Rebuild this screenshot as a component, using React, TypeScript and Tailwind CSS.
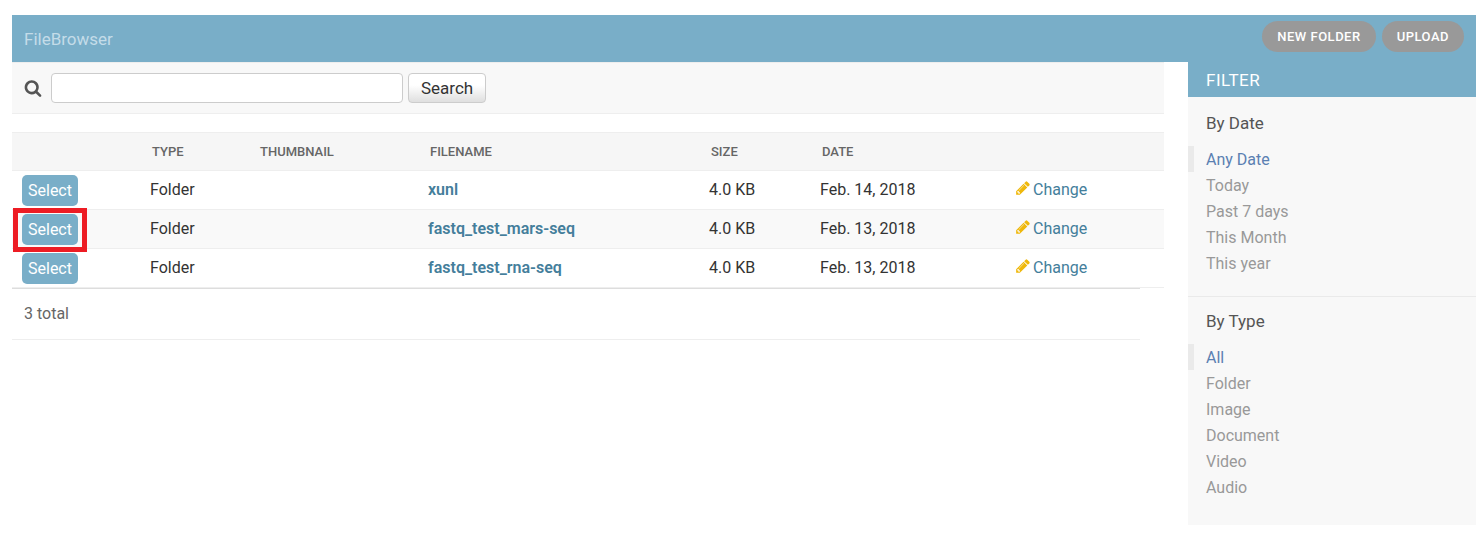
import React from "react";

type FileRow = { name: string; type: string; size: string; date: string; marked?: boolean };

const files: FileRow[] = [
  { name: "xunl", type: "Folder", size: "4.0 KB", date: "Feb. 14, 2018" },
  { name: "fastq_test_mars-seq", type: "Folder", size: "4.0 KB", date: "Feb. 13, 2018", marked: true },
  { name: "fastq_test_rna-seq", type: "Folder", size: "4.0 KB", date: "Feb. 13, 2018" },
];

const filters = [
  { title: "By Date", options: ["Any Date", "Today", "Past 7 days", "This Month", "This year"] },
  { title: "By Type", options: ["All", "Folder", "Image", "Document", "Video", "Audio"] },
];

function SearchIcon() {
  return (
    <svg viewBox="0 0 1792 1792" className="size-[18px] fill-[#555]" aria-hidden="true">
      <path d="M1216 832q0-185-131.500-316.500t-316.500-131.500-316.500 131.500-131.500 316.500 131.500 316.500 316.500 131.500 316.500-131.500 131.500-316.500zm512 832q0 52-38 90t-90 38q-54 0-90-38l-343-342q-179 124-399 124-143 0-273.500-55.500t-225-150-150-225-55.500-273.500 55.500-273.500 150-225 225-150 273.500-55.500 273.500 55.500 225 150 150 225 55.500 273.500q0 220-124 399l343 343q37 37 37 90z" />
    </svg>
  );
}

function PencilIcon() {
  return (
    <svg viewBox="0 0 1792 1792" className="mb-1 size-4 fill-[#efb80b]" aria-hidden="true">
      <path d="M491 1536l91-91-235-235-91 91v107h128v128h107zm523-928q0-22-22-22-10 0-17 7l-542 542q-7 7-7 17 0 22 22 22 10 0 17-7l542-542q7-7 7-17zm-54-192l416 416-832 832h-416v-416zm683 96q0 53-37 90l-166 166-416-416 166-165q36-38 90-38 53 0 91 38l235 234q37 39 37 91z" />
    </svg>
  );
}

function Header() {
  return (
    <header className="flex h-[47px] items-start justify-between bg-[#79aec8] px-3">
      <a href="#" className="pt-3 text-[17px] leading-6 text-[#c4dce8]">FileBrowser</a>
      <nav className="flex gap-1.5 pt-1.5">
        <a href="#new" className="rounded-full bg-[#999] px-[15px] pt-px text-[13px] leading-[30px] font-medium tracking-[0.5px] text-white uppercase">New Folder</a>
        <a href="#upload" className="rounded-full bg-[#999] px-[15px] pt-px text-[13px] leading-[30px] font-medium tracking-[0.5px] text-white uppercase">Upload</a>
      </nav>
    </header>
  );
}

function SearchBar() {
  return (
    <form className="flex items-center border-y border-[#eee] bg-[#f8f8f8] px-3 py-2.5" onSubmit={(e) => e.preventDefault()}>
      <label htmlFor="searchbar" className="mr-[9px]" aria-label="Search files">
        <SearchIcon />
      </label>
      <input id="searchbar" type="text" className="mr-[5px] h-[30px] w-[352px] rounded border border-[#ccc] bg-white px-1.5 outline-none" />
      <button type="submit" className="h-[30px] rounded border border-[#ccc] bg-linear-to-b from-white from-40% to-[#dfdfdf] px-3 pt-px text-[17px] text-[#333]">Search</button>
    </form>
  );
}

function FileTable() {
  return (
    <table className="mt-[18px] w-full table-fixed border-collapse text-left text-[#333]">
      <colgroup>
        <col className="w-[130px]" />
        <col className="w-[108px]" />
        <col className="w-[170px]" />
        <col />
        <col className="w-[111px]" />
        <col className="w-[196px]" />
        <col className="w-[156px]" />
      </colgroup>
      <thead>
        <tr className="h-[38px] border-y border-[#eee] bg-[#f6f6f6] text-[13px] text-[#666] uppercase">
          <th />
          <th className="px-2.5 font-medium">Type</th>
          <th className="px-2.5 font-medium">Thumbnail</th>
          <th className="px-2.5 font-medium">Filename</th>
          <th className="px-2.5 font-medium">Size</th>
          <th className="px-2.5 font-medium">Date</th>
          <th />
        </tr>
      </thead>
      <tbody>
        {files.map((f) => (
          <tr key={f.name} className="h-[39px] border-b border-[#eee] even:bg-[#f9f9f9]">
            <td className="px-2.5">
              <div className="relative flex w-fit">
                <button type="button" className="h-[31px] rounded-[5px] bg-[#79aec8] px-1.5 pt-px text-white">Select</button>
                {f.marked && <span className="pointer-events-none absolute -inset-x-[9px] -top-1.5 -bottom-[7px] border-[5px] border-[#ed1c24]" />}
              </div>
            </td>
            <td className="px-2">{f.type}</td>
            <td />
            <td className="px-2 font-semibold"><a href="#" className="text-[#447e9b]">{f.name}</a></td>
            <td className="px-2">{f.size}</td>
            <td className="px-2">{f.date}</td>
            <td className="px-[7px]">
              <a href="#change" className="flex items-center gap-0.5 text-[#447e9b]">
                <PencilIcon />
                Change
              </a>
            </td>
          </tr>
        ))}
      </tbody>
    </table>
  );
}

function FilterPanel() {
  return (
    <aside className="w-72 shrink-0 bg-[#f8f8f8] pb-[13px]">
      <h2 className="mb-0.5 bg-[#79aec8] px-[18px] pt-px text-[17px] leading-[34px] tracking-[0.5px] text-white uppercase">Filter</h2>
      {filters.map((group) => (
        <section key={group.title} className="border-b border-[#eaeaea] pt-2.5 pb-5 last:border-0 last:pb-3">
          <h3 className="mb-[9px] px-[18px] text-[17px] leading-7 text-[#555]">{group.title}</h3>
          <ul>
            {group.options.map((o, i) => (
              <li key={o} className={i === 0 ? "border-l-[6px] border-[#eaeaea] pl-3" : "pl-[18px]"}>
                <a href="#" className={i === 0 ? "block pt-px leading-[25px] text-[#5b80b2]" : "block pt-px leading-[25px] text-[#999]"}>{o}</a>
              </li>
            ))}
          </ul>
        </section>
      ))}
    </aside>
  );
}

export default function App() {
  return (
    <div className="min-h-screen bg-white pt-[15px] pr-2 pl-3 font-['Roboto',sans-serif] text-base font-normal">
      <Header />
      <div className="flex items-start gap-6">
        <main className="min-w-0 flex-1">
          <SearchBar />
          <FileTable />
          <p className="mr-6 border-t border-b border-t-[#ddd] border-b-[#eee] px-3 leading-[50px] text-[#666]">3 total</p>
        </main>
        <FilterPanel />
      </div>
    </div>
  );
}
